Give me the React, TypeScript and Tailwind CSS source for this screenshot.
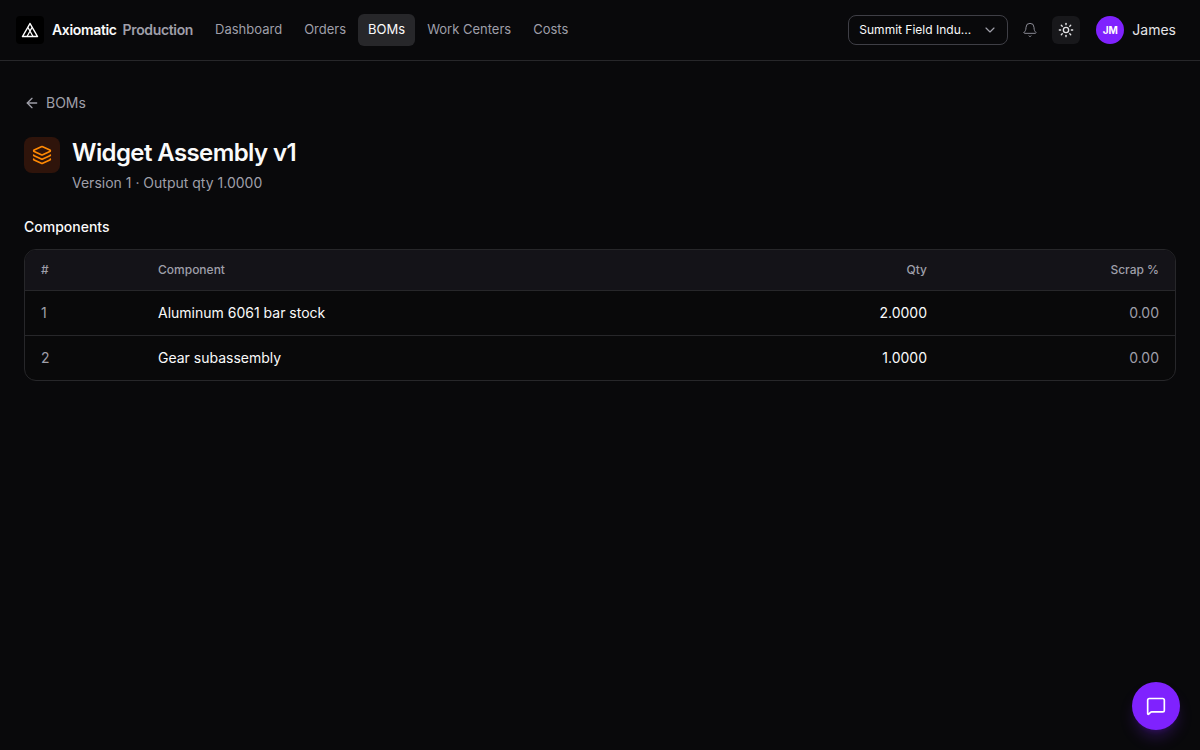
import { ArrowLeft, Bell, ChevronDown, Layers, MessageSquare, Sun } from "lucide-react";
import clsx from "clsx";

const navItems = ["Dashboard", "Orders", "BOMs", "Work Centers", "Costs"];

const components = [
  { line: 1, name: "Aluminum 6061 bar stock", qty: "2.0000", scrap: "0.00" },
  { line: 2, name: "Gear subassembly", qty: "1.0000", scrap: "0.00" },
];

function Logo() {
  return (
    <span className="grid size-7 place-items-center rounded-sm bg-black text-white">
      <svg viewBox="0 0 18 16" className="h-4 w-[18px]" fill="none" stroke="currentColor" strokeWidth="1.5" strokeLinejoin="round" aria-hidden="true">
        <path d="M9 1.5 1.5 14.5h15z" />
        <path d="M7 5.5l5 9M11 5.5l-5 9" strokeWidth="1.3" />
      </svg>
    </span>
  );
}

function Header() {
  return (
    <header className="flex h-[61px] items-center border-b border-[#27272a] px-4">
      <a href="#" className="flex items-center gap-2 text-sm font-semibold tracking-tight">
        <Logo />
        <span className="flex gap-1.5">
          <span className="text-[#fafafa]">Axiomatic</span>
          <span className="text-[#9f9fa9]">Production</span>
        </span>
      </a>
      <nav className="ml-3 flex gap-0.5">
        {navItems.map((item) => (
          <a
            key={item}
            href="#"
            aria-current={item === "BOMs" ? "page" : undefined}
            className={clsx(
              "flex h-8 items-center rounded-md px-2.5 text-[13px]",
              item === "BOMs" ? "bg-[#27272a] text-[#fafafa]" : "text-[#9f9fa9] hover:text-[#fafafa]"
            )}
          >
            {item}
          </a>
        ))}
      </nav>
      <div className="ml-auto flex items-center gap-2">
        <div className="grid w-40 items-center">
          <select
            aria-label="Organization"
            className="col-start-1 row-start-1 h-[30px] w-full appearance-none rounded-lg border border-[#3f3f46] bg-transparent pr-8 pl-2.5 text-xs text-[#fafafa]"
          >
            <option>Summit Field Indu...</option>
          </select>
          <ChevronDown size={16} strokeWidth={1.75} className="pointer-events-none col-start-1 row-start-1 mr-2.5 justify-self-end text-[#9f9fa9]" />
        </div>
        <button aria-label="Notifications" className="grid size-7 place-items-center text-[#8a8a94]">
          <Bell size={16} strokeWidth={1.5} />
        </button>
        <button aria-label="Toggle theme" className="grid size-7 place-items-center rounded-md bg-[#18181b] text-[#e4e4e7]">
          <Sun size={16} />
        </button>
        <button className="flex items-center gap-2 px-2 text-sm text-[#e4e4e7]">
          <span className="grid size-7 place-items-center rounded-full bg-[#7f22fe] text-[10px] font-bold text-white">JM</span>
          James
        </button>
      </div>
    </header>
  );
}

function ComponentsTable() {
  return (
    <div className="overflow-hidden rounded-xl border border-[#27272a] bg-[#09090a]">
      <table className="w-full text-left text-sm">
        <thead className="bg-[#141318] text-xs text-[#9f9fa9]">
          <tr className="border-b border-[#27272a]">
            <th scope="col" className="w-[117px] px-4 py-3 font-medium">#</th>
            <th scope="col" className="px-4 py-3 font-medium">Component</th>
            <th scope="col" className="px-4 py-3 text-right font-medium">Qty</th>
            <th scope="col" className="w-[232px] px-4 py-3 text-right font-medium">Scrap %</th>
          </tr>
        </thead>
        <tbody className="divide-y divide-[#27272a]">
          {components.map((row) => (
            <tr key={row.line}>
              <td className="px-4 py-3 text-[#9f9fa9]">{row.line}</td>
              <td className="px-4 py-3 text-[#fafafa]">{row.name}</td>
              <td className="px-4 py-3 text-right text-[#fafafa]">{row.qty}</td>
              <td className="px-4 py-3 text-right text-[#9f9fa9]">{row.scrap}</td>
            </tr>
          ))}
        </tbody>
      </table>
    </div>
  );
}

export default function App() {
  return (
    <div className="min-h-screen bg-[#09090b] font-['Inter',sans-serif] text-[#fafafa] antialiased">
      <Header />
      <main className="px-6 py-8">
        <a href="#" className="flex w-fit items-center gap-1.5 text-sm text-[#9f9fa9]">
          <ArrowLeft size={16} />
          BOMs
        </a>
        <div className="mt-6 flex items-start gap-3">
          <span className="grid size-9 place-items-center rounded-lg bg-[#2f140b] text-[#ff8904]">
            <Layers size={20} />
          </span>
          <div>
            <h1 className="text-2xl font-semibold tracking-tight">Widget Assembly v1</h1>
            <p className="mt-1 text-sm text-[#9f9fa9]">Version 1 · Output qty 1.0000</p>
          </div>
        </div>
        <h2 className="mt-6 mb-3 text-sm font-medium">Components</h2>
        <ComponentsTable />
      </main>
      <button
        aria-label="Open chat"
        className="fixed right-5 bottom-5 grid size-12 place-items-center rounded-full bg-[#7f22fe] text-white shadow-lg shadow-[#7f22fe]/25"
      >
        <MessageSquare size={20} />
      </button>
    </div>
  );
}
